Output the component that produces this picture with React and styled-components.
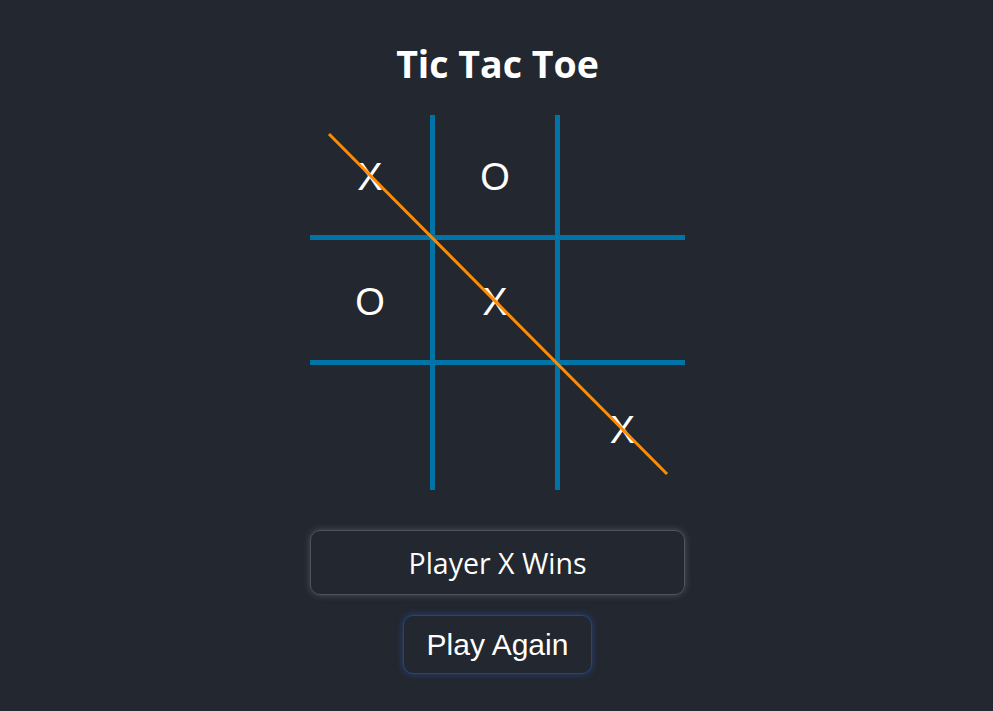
import React from "react";
import styled, { createGlobalStyle } from "styled-components";

const GlobalStyle = createGlobalStyle`
    html, body {
        margin: 0;
        padding: 0;
        background: #23272f;
    }
    body {
        font-family: "Open Sans", "Noto Sans", sans-serif;
        color: #ffffff;
    }
`;

const Page = styled.div`
    display: flex;
    flex-direction: column;
    align-items: center;
    min-height: 711px;
    padding-top: 36px;
    padding-left: 2px;
    box-sizing: border-box;
`;

const Title = styled.h1`
    margin: 0 0 24px;
    font-size: 37.5px;
    font-weight: 700;
    line-height: 55px;
`;

const Board = styled.div`
    position: relative;
    display: grid;
    grid-template-columns: repeat(3, 125px);
    grid-template-rows: repeat(3, 125px);
`;

const Cell = styled.div`
    display: flex;
    align-items: center;
    justify-content: center;
    box-sizing: border-box;
    font-family: "Liberation Sans", Arial, sans-serif;
    font-size: 38px;
    color: #ffffff;
    border-right: ${(p) => (p.$right ? "5px solid #0074a6" : "none")};
    border-bottom: ${(p) => (p.$bottom ? "5px solid #0074a6" : "none")};
    padding-top: ${(p) => (p.$row === 2 ? "6px" : "5px")};
`;

const Strike = styled.svg`
    position: absolute;
    left: 0;
    top: 0;
    width: 375px;
    height: 375px;
    pointer-events: none;
`;

const Status = styled.div`
    margin-top: 40px;
    width: 375px;
    height: 65px;
    box-sizing: border-box;
    display: flex;
    align-items: center;
    justify-content: center;
    border: 1px solid #4f535e;
    border-radius: 10px;
    box-shadow: 0 0 7px rgba(180, 185, 200, 0.3);
    font-size: 28.5px;
`;

const ResetButton = styled.button`
    margin-top: 20px;
    height: 59px;
    padding: 0 23px;
    background: #23272f;
    color: #ffffff;
    border: 1px solid #26447f;
    border-radius: 10px;
    box-shadow: 0 0 7px rgba(45, 90, 190, 0.55);
    font-family: "Liberation Sans", Arial, sans-serif;
    font-size: 30px;
    cursor: pointer;
`;

const tiles = ["X", "O", null, "O", "X", null, null, null, "X"];

const App = () => {
    return (
        <>
            <GlobalStyle />
            <Page>
                <Title>Tic Tac Toe</Title>
                <Board>
                    {tiles.map((t, i) => (
                        <Cell
                            key={i}
                            $row={Math.floor(i / 3)}
                            $right={i % 3 !== 2}
                            $bottom={i < 6}
                        >
                            {t}
                        </Cell>
                    ))}
                    <Strike viewBox="0 0 375 375">
                        <line x1="19" y1="19" x2="357" y2="359" stroke="#ff8c00" strokeWidth="3" />
                    </Strike>
                </Board>
                <Status>Player X Wins</Status>
                <ResetButton>Play Again</ResetButton>
            </Page>
        </>
    );
};

export default App;
